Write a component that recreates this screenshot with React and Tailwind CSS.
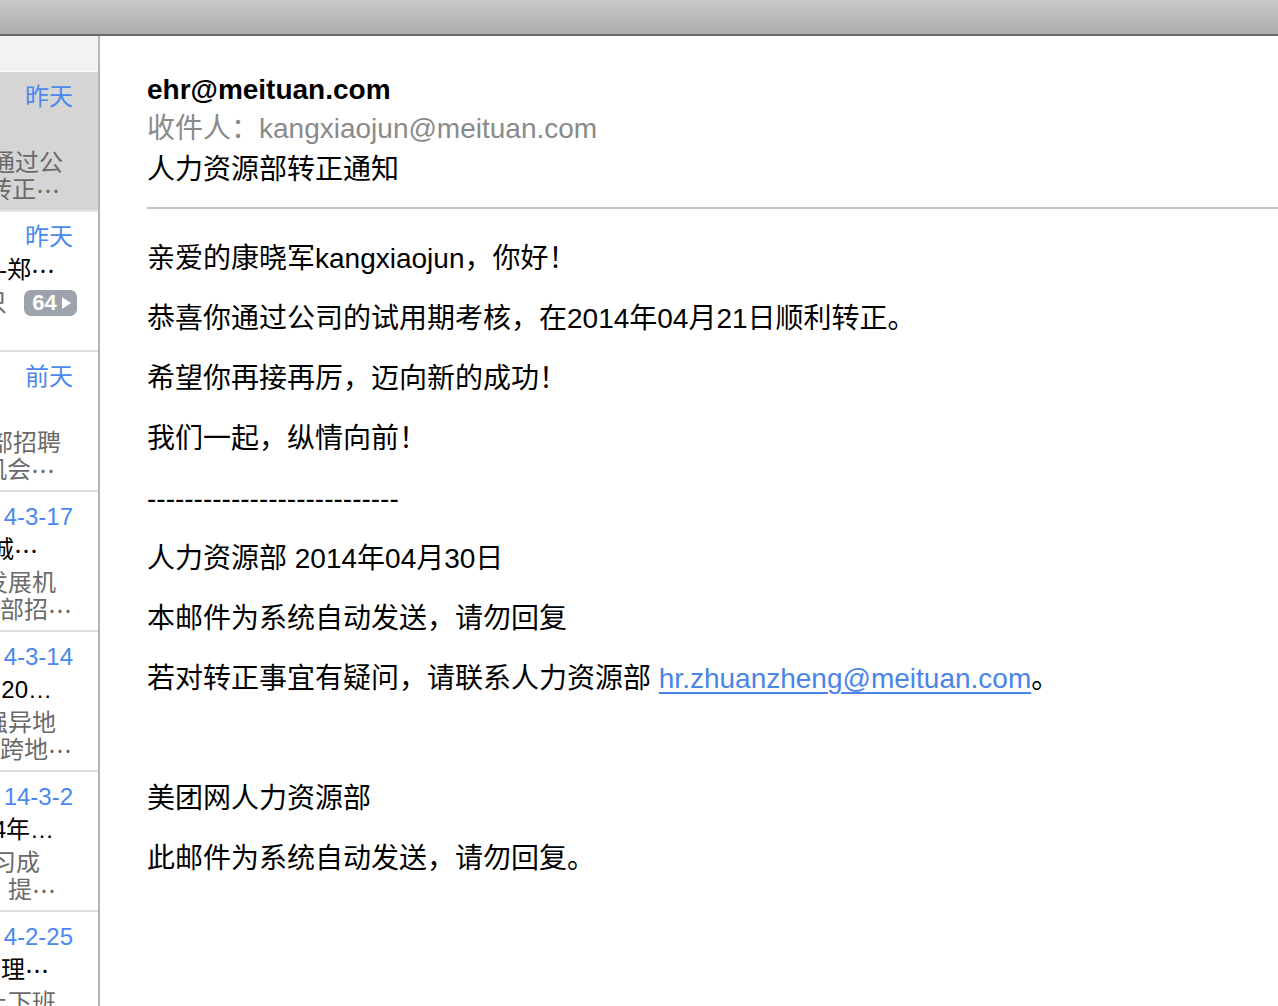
import React from 'react';

const font = { fontFamily: '"Liberation Sans", "Noto Sans CJK SC", sans-serif' };

// items in the message list; the list is cut off on the left, so lines end at fixed right offsets
const items = [
    {
        date: '昨天',
        selected: true,
        sender: null,
        preview: [
            { text: '恭喜你通过公', pr: 'pr-[35px]' },
            { text: '顺利转正', pr: 'pr-[38px]', cjkDots: true },
        ],
    },
    {
        date: '昨天',
        sender: { text: '美团网行政部-郑', pr: 'pr-[43px]', cjkDots: true },
        badge: true,
        preview: [],
    },
    {
        date: '前天',
        sender: null,
        preview: [
            { text: '美团网人力资源部招聘', pr: 'pr-[37px]' },
            { text: '内部发展机会', pr: 'pr-[43px]', cjkDots: true },
        ],
    },
    {
        date: '4-3-17',
        sender: { text: '美团网招聘城', pr: 'pr-[60px]', cjkDots: true },
        preview: [
            { text: '为员工提供更多发展机', pr: 'pr-[42px]' },
            { text: '机会，人力资源 部招', pr: 'pr-[26px]', cjkDots: true },
        ],
    },
    {
        date: '4-3-14',
        sender: { text: '美团网 20…', pr: 'pr-[46px]' },
        preview: [
            { text: '关于加强异地', pr: 'pr-[42px]' },
            { text: '员工跨地', pr: 'pr-[26px]', cjkDots: true },
        ],
    },
    {
        date: '14-3-2',
        sender: { text: '2014年…', pr: 'pr-[44px]' },
        preview: [
            { text: '学习成', pr: 'pr-[58px]' },
            { text: '学习 提', pr: 'pr-[42px]', cjkDots: true },
        ],
    },
    {
        date: '4-2-25',
        sender: { text: '考勤管理', pr: 'pr-[49px]', cjkDots: true },
        preview: [{ text: '按时上下班', pr: 'pr-[42px]' }],
    },
];

function Line({ line, className = '' }) {
    return (
        <div className={`flex justify-end whitespace-nowrap ${line.pr} ${className}`}>
            <span className="shrink-0">{line.text}</span>
            {line.cjkDots && (
                <span className="shrink-0" style={{ fontFamily: '"Noto Sans CJK SC", sans-serif' }}>
                    …
                </span>
            )}
        </div>
    );
}

function ListItem({ item }) {
    return (
        <div
            className={`h-[140px] shrink-0 overflow-hidden border-b-2 pt-[11px] text-[24px] ${
                item.selected ? 'bg-[#d5d5d5] border-[#e4e4e4]' : 'bg-white border-[#dcdcdc]'
            }`}
        >
            <div className="flex h-[28px] justify-end whitespace-nowrap pr-[25px] leading-[28px] text-[#4a88ee]">
                {item.date}
            </div>
            <div className="mt-[5px] h-[28px] leading-[28px] text-black">
                {item.sender && <Line line={item.sender} />}
            </div>
            <div className="mt-[5px] leading-[27px] text-[#6a6a6a]">
                {item.badge && (
                    <div className="flex h-[27px] items-center justify-end whitespace-nowrap pr-[21px]">
                        <span className="shrink-0">积分记录只</span>
                        <span className="ml-[17px] flex h-[26px] w-[53px] shrink-0 items-center justify-center gap-[5px] rounded-[7px] bg-[#9da3ac] pl-[2px] text-[22px] font-bold leading-none text-white">
                            64
                            <svg width="9" height="12" viewBox="0 0 9 12">
                                <path d="M0 0 L9 6 L0 12 Z" fill="white" />
                            </svg>
                        </span>
                    </div>
                )}
                {item.preview.map((p, i) => (
                    <Line key={i} line={p} className="h-[27px]" />
                ))}
            </div>
        </div>
    );
}

export default function App() {
    const body = [
        '亲爱的康晓军kangxiaojun，你好！',
        '恭喜你通过公司的试用期考核，在2014年04月21日顺利转正。',
        '希望你再接再厉，迈向新的成功！',
        '我们一起，纵情向前！',
        '---------------------------',
        '人力资源部 2014年04月30日',
        '本邮件为系统自动发送，请勿回复',
    ];

    return (
        <div className="flex h-[1006px] w-[1278px] flex-col overflow-hidden bg-white" style={font}>
            <div className="h-[36px] shrink-0 border-b-2 border-[#6a6a6a] bg-gradient-to-b from-[#c9c9c9] to-[#acacac]" />

            <div className="flex min-h-0 flex-1">
                <div className="flex w-[100px] shrink-0 flex-col overflow-hidden border-r-2 border-[#b4b4b4]">
                    <div className="h-[36px] shrink-0 border-b border-[#fafafa] bg-[#f2f2f2]" />
                    {items.map((item, i) => (
                        <ListItem key={i} item={item} />
                    ))}
                </div>

                <div className="min-w-0 flex-1 pl-[47px] pt-[34px] text-[28px] text-black">
                    <div className="leading-[40px] font-bold">ehr@meituan.com</div>
                    <div className="leading-[38px] text-[#8a8a8a]">收件人：kangxiaojun@meituan.com</div>
                    <div className="leading-[44px]">人力资源部转正通知</div>
                    <div className="mt-[15px] h-[2px] bg-[#c4c4c4]" />

                    <div className="mt-[20px]">
                        {body.map((t, i) => (
                            <div key={i} className="h-[60px] whitespace-nowrap leading-[60px]">
                                {t}
                            </div>
                        ))}
                        <div className="h-[60px] whitespace-nowrap leading-[60px]">
                            若对转正事宜有疑问，请联系人力资源部{' '}
                            <a href="#" className="text-[#4a84e8] underline decoration-[2px] underline-offset-[4px]">
                                hr.zhuanzheng@meituan.com
                            </a>
                            。
                        </div>
                        <div className="h-[60px]" />
                        <div className="h-[60px] whitespace-nowrap leading-[60px]">美团网人力资源部</div>
                        <div className="h-[60px] whitespace-nowrap leading-[60px]">此邮件为系统自动发送，请勿回复。</div>
                    </div>
                </div>
            </div>
        </div>
    );
}
